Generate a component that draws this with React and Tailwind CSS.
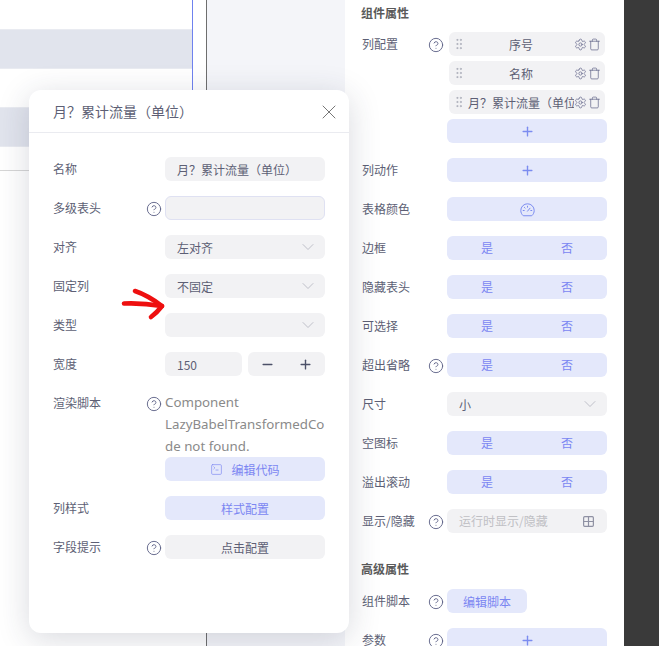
import { ChevronDown, CircleHelp, Grid2x2, GripVertical, Minus, Plus, Settings, SquareTerminal, Trash, X } from "lucide-react";

const font = { fontFamily: '"Noto Sans CJK SC", "Noto Sans", sans-serif' };

function Help() {
  return <CircleHelp size={16} strokeWidth={1.4} className="mt-[2px] shrink-0 text-[#5f6388]" />;
}

function Row({ label, help, labelW, children, className = "" }) {
  return (
    <div className={`flex items-start ${className}`}>
      <div className={`flex h-6 shrink-0 items-center justify-between pr-[3px] ${labelW}`}>
        <span className="whitespace-nowrap text-xs text-[#5d5f75]">{label}</span>
        {help && <Help />}
      </div>
      <div className="min-w-0 flex-1">{children}</div>
    </div>
  );
}

function Blue({ children, className = "w-full" }) {
  return (
    <div className={`flex h-6 items-center justify-center gap-2 rounded-md bg-[#e4e8fb] pt-px text-xs text-[#7b86f2] ${className}`}>
      {children}
    </div>
  );
}

function YesNo() {
  return (
    <div className="flex h-6 items-center rounded-md bg-[#e4e8fb] text-xs text-[#7b86f2]">
      <span className="flex-1 text-center">是</span>
      <span className="flex-1 text-center">否</span>
    </div>
  );
}

function Select({ value }) {
  return (
    <div className="flex h-6 items-center justify-between rounded-md bg-[#f2f2f4] pl-3 pr-[7px] text-xs text-[#5d5f75]">
      <span className="pt-px">{value}</span>
      <ChevronDown size={20} strokeWidth={1} className="text-[#b4b6c0]" />
    </div>
  );
}

function ColumnItem({ name }) {
  return (
    <div className="flex h-6 items-center rounded-md bg-[#f2f2f4] pl-[3px] pr-1 text-xs text-[#5d5f75]">
      <GripVertical size={14} strokeWidth={1.1} className="shrink-0 text-[#9a9cab]" />
      <span className="min-w-0 flex-1 overflow-hidden whitespace-nowrap pl-[2px] pt-px text-center">{name}</span>
      <Settings size={13} strokeWidth={1.3} className="shrink-0 text-[#5f6388]" />
      <Trash size={13} strokeWidth={1.3} className="ml-px shrink-0 text-[#5f6388]" />
    </div>
  );
}

function GaugeIcon() {
  return (
    <svg width="15" height="14" viewBox="0 0 15 14" fill="none" stroke="#7b8cf0" strokeWidth="1" strokeLinecap="round" strokeLinejoin="round">
      <path d="M3 12.5C1.6 11.3 0.8 9.5 0.8 7.5a6.7 6.7 0 0 1 13.4 0c0 2-.8 3.8-2.2 5z" />
      <path d="M7.5 8.2L10 5.2M3.2 7.5h1M10.8 7.5h1M7.5 3.2v1M4.4 4.4l.7.7" />
    </svg>
  );
}

function Modal() {
  const labelW = "w-[112px]";
  return (
    <div className="absolute left-[29px] top-[90px] h-[543px] w-[320px] rounded-xl bg-white shadow-[0_6px_32px_rgba(40,44,70,0.18)]">
      <div className="flex h-[43px] items-center justify-between border-b border-[#eaebf0] pl-6 pr-[8px]">
        <span className="text-sm text-[#5d5f75]">月？累计流量（单位）</span>
        <X size={24} strokeWidth={1} className="mt-[2px] text-[#777]" />
      </div>
      <div className="flex flex-col gap-[15px] pl-6 pr-6 pt-6">
        <Row label="名称" labelW={labelW}>
          <div className="flex h-6 items-center rounded-md bg-[#f2f2f4] pl-3 pt-px text-xs text-[#5d5f75]">月？累计流量（单位）</div>
        </Row>
        <Row label="多级表头" help labelW={labelW}>
          <div className="h-6 rounded-md border border-[#dfe1f2] bg-[#f2f2f4]" />
        </Row>
        <Row label="对齐" labelW={labelW}><Select value="左对齐" /></Row>
        <Row label="固定列" labelW={labelW}><Select value="不固定" /></Row>
        <Row label="类型" labelW={labelW}><Select value="" /></Row>
        <Row label="宽度" labelW={labelW}>
          <div className="flex gap-[6px]">
            <div className="flex h-6 w-[77px] items-center rounded-md bg-[#f2f2f4] pl-3 pt-px text-xs text-[#5d5f75]">150</div>
            <div className="flex h-6 w-[77px] items-center justify-between rounded-md bg-[#f2f2f4] px-3 pt-px text-[#4c5168]">
              <Minus size={15} strokeWidth={2.2} />
              <Plus size={15} strokeWidth={2.2} />
            </div>
          </div>
        </Row>
        <Row label="渲染脚本" help labelW={labelW}>
          <p className="text-[13.3px] leading-[22px] text-[#8a8a8a] [overflow-wrap:anywhere]" style={{ fontFamily: '"Noto Sans", sans-serif' }}>
            Component LazyBabelTransformedCode not found.
          </p>
          <Blue><SquareTerminal size={13} strokeWidth={1.2} />编辑代码</Blue>
        </Row>
        <Row label="列样式" labelW={labelW}><Blue>样式配置</Blue></Row>
        <Row label="字段提示" help labelW={labelW}>
          <div className="flex h-6 items-center justify-center rounded-md bg-[#f2f2f4] pt-px text-xs text-[#5d5f75]">点击配置</div>
        </Row>
      </div>
    </div>
  );
}

function Arrow() {
  return (
    <svg className="absolute left-[118px] top-[285px]" width="50" height="38" viewBox="0 0 50 38" fill="none">
      <path d="M6 18.5C18 18 32 19 44 21" stroke="#ee0f0f" strokeWidth="4.6" strokeLinecap="round" />
      <path d="M17 6C26 9 36 15 44 21C41 25 37 29 33 32" stroke="#ee0f0f" strokeWidth="4.6" strokeLinecap="round" strokeLinejoin="round" />
    </svg>
  );
}

function AddIcon() {
  return <Plus size={15} strokeWidth={2.2} className="text-[#7b8cf0]" />;
}

export default function App() {
  const labelW = "w-[85px]";
  return (
    <div className="relative flex h-[646px] w-[659px] overflow-hidden bg-white" style={font}>
      <div className="w-[206px] shrink-0 pr-[13px]">
        <div className="h-[171px] border-b border-r border-b-[#d6d6d6] border-r-[#6f82ef] pt-[29px]">
          <div className="h-10 border-y border-[#e9ebf1] bg-[#e1e4ed]" />
          <div className="mt-[38px] h-10 border-y border-[#e9ebf1] bg-[#e1e4ed]" />
        </div>
      </div>
      <div className="w-[139px] shrink-0 border-l border-[#6e6e6e] bg-[#f4f5f9]" />
      <div className="w-[279px] shrink-0 pl-[17px] pr-[17px]">
        <div className="-ml-px flex h-[32px] items-start pt-[4px] text-xs font-bold leading-[18px] text-[#5a5a5a]">组件属性</div>
        <div className="flex flex-col gap-[15px]">
          <Row label="列配置" help labelW={labelW}>
            <div className="flex flex-col gap-[5px]">
              <div className="mx-[2px] flex flex-col gap-[5px]">
                <ColumnItem name="序号" />
                <ColumnItem name="名称" />
                <ColumnItem name="月？累计流量（单位）" />
              </div>
              <Blue><AddIcon /></Blue>
            </div>
          </Row>
          <Row label="列动作" labelW={labelW}><Blue><AddIcon /></Blue></Row>
          <Row label="表格颜色" labelW={labelW}><Blue><GaugeIcon /></Blue></Row>
          <Row label="边框" labelW={labelW}><YesNo /></Row>
          <Row label="隐藏表头" labelW={labelW}><YesNo /></Row>
          <Row label="可选择" labelW={labelW}><YesNo /></Row>
          <Row label="超出省略" help labelW={labelW}><YesNo /></Row>
          <Row label="尺寸" labelW={labelW}><Select value="小" /></Row>
          <Row label="空图标" labelW={labelW}><YesNo /></Row>
          <Row label="溢出滚动" labelW={labelW}><YesNo /></Row>
          <Row label="显示/隐藏" help labelW={labelW}>
            <div className="flex h-6 items-center justify-between rounded-md bg-[#f2f2f4] pl-3 pr-3 text-xs text-[#c0c0c4]">
              <span>运行时显示/隐藏</span>
              <Grid2x2 size={13} strokeWidth={2.2} className="text-[#8f91a3]" />
            </div>
          </Row>
        </div>
        <div className="-ml-px mt-[27px] h-[29px] text-xs font-bold leading-[18px] text-[#5a5a5a]">高级属性</div>
        <div className="flex flex-col gap-[15px]">
          <Row label="组件脚本" help labelW={labelW}><Blue className="w-20">编辑脚本</Blue></Row>
          <Row label="参数" help labelW={labelW}><Blue><AddIcon /></Blue></Row>
        </div>
      </div>
      <div className="flex-1 bg-[#3a3a3a]" />
      <Modal />
      <Arrow />
    </div>
  );
}
